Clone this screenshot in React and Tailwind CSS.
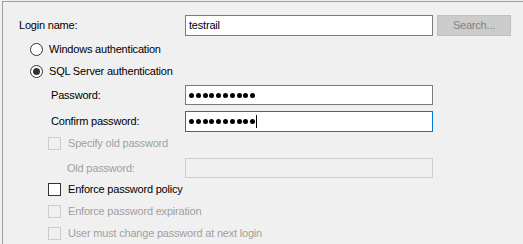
import React from "react";

const font = { fontFamily: '"Liberation Sans", Arial, sans-serif' };

function Radio({ checked }) {
  return (
    <span className="w-[13px] h-[13px] rounded-full border border-[#333333] bg-white flex items-center justify-center shrink-0">
      {checked && <span className="w-[7px] h-[7px] rounded-full bg-[#333333]" />}
    </span>
  );
}

function Check({ disabled }) {
  return (
    <span
      className={
        "w-[13px] h-[13px] shrink-0 border " +
        (disabled ? "border-[#cccccc] bg-[#f0f0f0]" : "border-[#333333] bg-white")
      }
    />
  );
}

function Dots() {
  return (
    <span className="flex gap-[1.8px]">
      {Array.from({ length: 10 }).map((_, i) => (
        <span key={i} className="w-[5px] h-[5px] rounded-full bg-black" />
      ))}
    </span>
  );
}

export default function App() {
  return (
    <div className="w-[523px] h-[244px] bg-[#f0f0f0] overflow-hidden text-[11px] tracking-[-0.2px] text-black" style={font}>
      <div className="ml-[2px] mt-[1px] border-l border-t border-[#a0a0a0] h-[260px] w-[540px]">
        {/* Login name */}
        <div className="mt-[13px] h-[21px] flex items-center pl-[16px]">
          <span className="w-[166px]">Login name:</span>
          <div className="w-[248px] h-[21px] border border-[#7a7a7a] bg-white flex items-center pl-[3px] text-[#000010]">
            testrail
          </div>
          <div className="ml-[4px] w-[74px] h-[21px] border border-[#bfbfbf] bg-[#cccccc] flex items-center justify-center text-[#838383]">
            Search...
          </div>
        </div>
        {/* Radios */}
        <div className="mt-[2px] h-[22px] flex items-center pl-[27px] gap-[6px]">
          <Radio />
          <span>Windows authentication</span>
        </div>
        <div className="h-[22px] flex items-center pl-[27px] gap-[6px]">
          <Radio checked />
          <span>SQL Server authentication</span>
        </div>
        {/* Password */}
        <div className="mt-[3px] h-[20px] flex items-center pl-[48px]">
          <span className="w-[134px]">Password:</span>
          <div className="w-[248px] h-[20px] border border-[#7a7a7a] bg-white flex items-center pl-[3px]">
            <Dots />
          </div>
        </div>
        <div className="mt-[6px] h-[21px] flex items-center pl-[48px]">
          <span className="w-[134px]">Confirm password:</span>
          <div className="w-[248px] h-[21px] border border-[#0078d7] bg-white flex items-center pl-[3px]">
            <Dots />
            <span className="ml-[1px] w-[1px] h-[13px] bg-black" />
          </div>
        </div>
        {/* Specify old password */}
        <div className="h-[22px] flex items-center pl-[45px] gap-[7px] text-[#a0a0a0]">
          <Check disabled />
          <span>Specify old password</span>
        </div>
        <div className="mt-[4px] h-[20px] flex items-center pl-[64px] text-[#a0a0a0]">
          <span className="w-[118px]">Old password:</span>
          <div className="w-[248px] h-[20px] border border-[#cccccc] bg-[#f0f0f0]" />
        </div>
        <div className="h-[22px] flex items-center pl-[45px] gap-[7px]">
          <Check />
          <span>Enforce password policy</span>
        </div>
        <div className="h-[22px] flex items-center pl-[45px] gap-[7px] text-[#a0a0a0]">
          <Check disabled />
          <span>Enforce password expiration</span>
        </div>
        <div className="h-[22px] flex items-center pl-[45px] gap-[7px] text-[#a0a0a0]">
          <Check disabled />
          <span>User must change password at next login</span>
        </div>
      </div>
    </div>
  );
}
